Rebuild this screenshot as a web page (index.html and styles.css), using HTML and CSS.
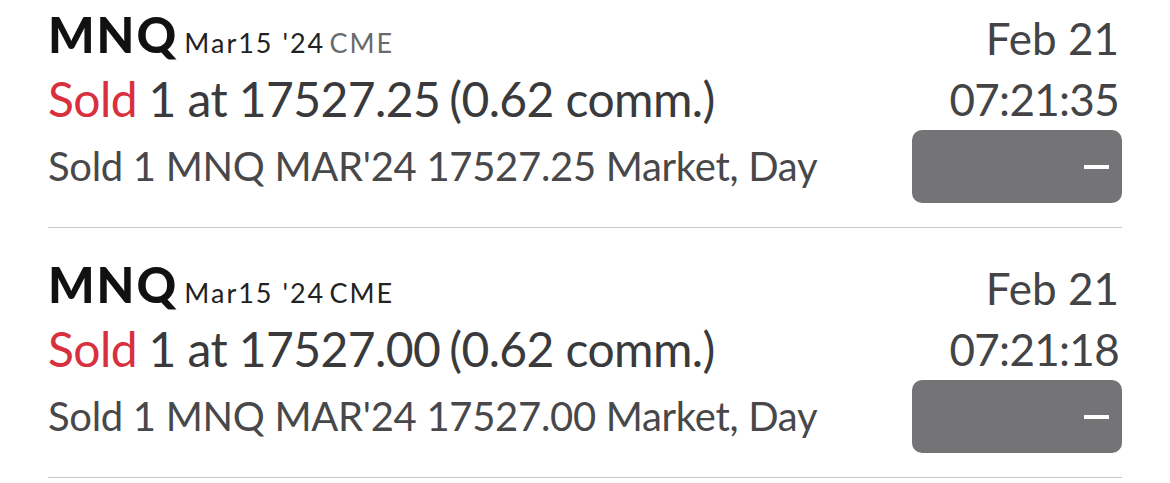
FILE: index.html
```html
<!DOCTYPE html>
<html>
<head>
<meta charset="utf-8">
<link rel="stylesheet" href="styles.css">
</head>
<body>
<div class="list">
  <div class="row">
    <div class="left">
      <div class="l1"><span class="sym">MNQ</span><span class="exp">Mar15 '24</span> <span class="exch muted">CME</span></div>
      <div class="l2"><span class="side">Sold</span> 1 at 17527.25<span class="comm">(0.62 comm.)</span></div>
      <div class="l3">Sold 1 MNQ MAR'24 17527.25 Market, Day</div>
    </div>
    <div class="right">
      <div class="date">Feb 21</div>
      <div class="time">07:21:35</div>
      <div class="btn"><span class="minus"></span></div>
    </div>
  </div>
  <div class="row">
    <div class="left">
      <div class="l1"><span class="sym">MNQ</span><span class="exp">Mar15 '24</span> <span class="exch">CME</span></div>
      <div class="l2"><span class="side">Sold</span> 1 at 17527.00<span class="comm">(0.62 comm.)</span></div>
      <div class="l3">Sold 1 MNQ MAR'24 17527.00 Market, Day</div>
    </div>
    <div class="right">
      <div class="date">Feb 21</div>
      <div class="time">07:21:18</div>
      <div class="btn"><span class="minus"></span></div>
    </div>
  </div>
</div>
</body>
</html>
```
FILE: styles.css
```css
html, body {
  margin: 0;
  padding: 0;
  background: #ffffff;
}
body {
  font-family: "Lato", "Liberation Sans", sans-serif;
  color: #3a3a3c;
}
.list {
  margin: 0 48px;
}
.row {
  display: flex;
  justify-content: space-between;
  padding-top: 2px;
  height: 228px;
  box-sizing: border-box;
  border-bottom: 1px solid #c8c8c8;
}
.row + .row {
  margin-top: 22px;
}
.left {
  display: flex;
  flex-direction: column;
}
.l1 {
  height: 64px;
  line-height: 64px;
  white-space: nowrap;
}
.sym {
  font-size: 49px;
  font-weight: 900;
  color: #111111;
  letter-spacing: 2px;
}
.exp, .exch {
  font-size: 27px;
  color: #222222;
  letter-spacing: 2px;
}
.exp {
  margin-left: 6px;
}
.exch.muted {
  color: #6a6a6c;
}
.l2 {
  font-size: 48px;
  line-height: 66px;
  color: #3a3a3c;
  white-space: nowrap;
  letter-spacing: -0.6px;
}
.comm {
  margin-left: 9px;
}
.side {
  color: #d8303e;
}
.l3 {
  font-size: 40px;
  line-height: 68px;
  color: #48484a;
  white-space: nowrap;
  letter-spacing: -0.3px;
}
.right {
  display: flex;
  flex-direction: column;
  align-items: flex-end;
  width: 210px;
}
.date {
  font-size: 44px;
  line-height: 72px;
  color: #444446;
  padding-right: 3px;
}
.time {
  font-size: 44px;
  line-height: 50px;
  color: #444446;
  padding-right: 3px;
  letter-spacing: -0.7px;
}
.btn {
  margin-top: 6px;
  width: 210px;
  height: 73px;
  border-radius: 10px;
  background: #747476;
  display: flex;
  align-items: center;
  justify-content: flex-end;
  padding-right: 13px;
  box-sizing: border-box;
}
.minus {
  display: block;
  width: 25px;
  height: 4px;
  background: #ffffff;
}
```
